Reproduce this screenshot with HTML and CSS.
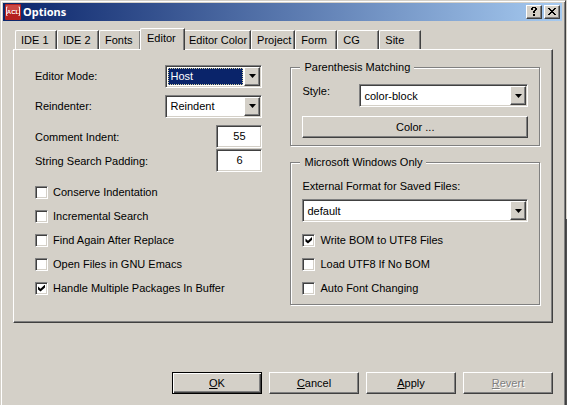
FILE: index.html
```html
<!DOCTYPE html>
<html lang="en">
<head>
<meta charset="utf-8">
<title>Options</title>
<link rel="stylesheet" href="styles.css">
</head>
<body>
<main class="window">
  <header class="titlebar">
    <svg class="app-icon" width="16" height="16" viewBox="0 0 16 16" aria-hidden="true">
      <rect width="16" height="16" rx="1" fill="#b5201f"/>
      <rect x="1" y="1" width="14" height="6" fill="#cc4844"/>
      <path d="M2.500 3H1.500V11.500H2.500M13.500 3H14.500V11.500H13.500" fill="none" stroke="#fff" stroke-opacity=".85"/>
      <text x="8" y="10" text-anchor="middle" class="app-icon-text">ACL</text>
    </svg>
    <h1 class="title">Options</h1>
    <button class="caption-button" type="button" aria-label="Help">
      <svg width="8" height="9" viewBox="0 0 8 9" shape-rendering="crispEdges"><path d="M1 1h1V0h4v1h1v2H6v1H5v2H3V4h1V3h1V1H3v2H1zM3 7h2v2H3z"/></svg>
    </button>
    <button class="caption-button caption-close" type="button" aria-label="Close">
      <svg width="8" height="7" viewBox="0 0 8 7" shape-rendering="crispEdges"><path d="M0 0h2v1h1v1h2V1h1V0h2v1H7v1H6v1H5v1h1v1h1v1h1v1H6V6H5V5H3v1H2v1H0V6h1V5h1V4h1V3H2V2H1V1H0z"/></svg>
    </button>
  </header>

  <nav class="tabs" role="tablist">
    <button class="tab" type="button" role="tab">IDE 1</button>
    <button class="tab" type="button" role="tab">IDE 2</button>
    <button class="tab" type="button" role="tab">Fonts</button>
    <button class="tab tab-selected" type="button" role="tab" aria-selected="true">Editor</button>
    <button class="tab" type="button" role="tab">Editor Color</button>
    <button class="tab" type="button" role="tab">Project</button>
    <button class="tab" type="button" role="tab">Form</button>
    <button class="tab" type="button" role="tab">CG</button>
    <button class="tab" type="button" role="tab">Site</button>
  </nav>

  <section class="panel" role="tabpanel">
    <div class="column settings">
      <div class="row">
        <label for="mode">Editor Mode:</label>
        <span class="combo combo-focused">
          <select id="mode"><option>Host</option></select>
          <span class="arrow"><svg width="7" height="4" viewBox="0 0 7 4"><path d="M0 0h7L3.500 4z"/></svg></span>
        </span>
      </div>
      <div class="row">
        <label for="reindenter">Reindenter:</label>
        <span class="combo">
          <select id="reindenter"><option>Reindent</option></select>
          <span class="arrow"><svg width="7" height="4" viewBox="0 0 7 4"><path d="M0 0h7L3.500 4z"/></svg></span>
        </span>
      </div>
      <div class="numbers">
        <div class="row">
          <label for="indent">Comment Indent:</label>
          <input class="number" id="indent" type="text" value="55">
        </div>
        <div class="row">
          <label for="padding">String Search Padding:</label>
          <input class="number" id="padding" type="text" value="6">
        </div>
      </div>
      <div class="checks">
        <label class="check"><input type="checkbox">Conserve Indentation</label>
        <label class="check"><input type="checkbox">Incremental Search</label>
        <label class="check"><input type="checkbox">Find Again After Replace</label>
        <label class="check"><input type="checkbox">Open Files in GNU Emacs</label>
        <label class="check"><input type="checkbox" checked>Handle Multiple Packages In Buffer</label>
      </div>
    </div>

    <div class="column groups">
      <fieldset class="group">
        <legend>Parenthesis Matching</legend>
        <div class="style-row">
          <label for="style">Style:</label>
          <span class="combo">
            <select id="style"><option>color-block</option></select>
            <span class="arrow"><svg width="7" height="4" viewBox="0 0 7 4"><path d="M0 0h7L3.500 4z"/></svg></span>
          </span>
        </div>
        <button class="button" type="button">Color ...</button>
      </fieldset>
      <fieldset class="group group-files">
        <legend>Microsoft Windows Only</legend>
        <label class="format-label" for="format">External Format for Saved Files:</label>
        <span class="combo">
          <select id="format"><option>default</option></select>
          <span class="arrow"><svg width="7" height="4" viewBox="0 0 7 4"><path d="M0 0h7L3.500 4z"/></svg></span>
        </span>
        <div class="checks group-checks">
          <label class="check"><input type="checkbox" checked>Write BOM to UTF8 Files</label>
          <label class="check"><input type="checkbox">Load UTF8 If No BOM</label>
          <label class="check"><input type="checkbox">Auto Font Changing</label>
        </div>
      </fieldset>
    </div>
  </section>

  <footer class="actions">
    <button class="button button-default" type="button"><u>O</u>K</button>
    <button class="button" type="button"><u>C</u>ancel</button>
    <button class="button" type="button"><u>A</u>pply</button>
    <button class="button" type="button" disabled><u>R</u>evert</button>
  </footer>
</main>
</body>
</html>
```
FILE: styles.css
```css
:root {
  --face: #d4d0c8;
  --shadow: #808080;
  --dark: #404040;
}

* {
  box-sizing: border-box;
}

body {
  margin: 0;
  padding-right: 1px;
  min-height: 100vh;
  display: flex;
  background: linear-gradient(#d4d0c8 219px, #505050 219px);
  font: 11px/14px "Liberation Sans", Arial, sans-serif;
  color: #000;
}

button,
input,
select {
  font: inherit;
  color: inherit;
  margin: 0;
  border-radius: 0;
}

/* Window frame */
.window {
  flex: 1;
  padding: 1px 1px 0 1px;
  background: var(--face);
  border: solid;
  border-width: 1px 1px 0 1px;
  border-color: var(--face) var(--dark) var(--face) var(--face);
  box-shadow: inset 1px 1px #fff, inset -1px 0 var(--shadow);
}

.titlebar {
  display: flex;
  align-items: center;
  height: 18px;
  margin: 1px 2px 0 1px;
  padding: 0 2px;
  background: linear-gradient(90deg, #0a246a, #a6caf0);
}

.app-icon {
  flex: none;
}

.app-icon-text {
  font: bold 6px "Liberation Sans", sans-serif;
  fill: #fff;
}

.title {
  flex: 1;
  margin: 0 0 0 2px;
  font: bold 11px/16px "Noto Sans", sans-serif;
  color: #fff;
}

.caption-button,
.button,
.arrow {
  background: var(--face);
  border: 1px solid;
  border-color: #fff var(--dark) var(--dark) #fff;
  box-shadow: inset -1px -1px var(--shadow);
}

.caption-button {
  display: flex;
  align-items: center;
  justify-content: center;
  width: 16px;
  height: 14px;
  padding: 0 1px 1px 0;
}

.caption-close {
  margin-left: 2px;
}

/* Tabs */
.tabs {
  display: flex;
  align-items: flex-end;
  height: 28px;
  padding-left: 13px;
}

.tab {
  height: 19px;
  min-width: 42px;
  padding: 0 3px 0 5px;
  text-align: left;
  background: var(--face);
  border: solid;
  border-width: 1px 1px 0 1px;
  border-color: #fff var(--dark) #fff #fff;
  border-top-left-radius: 2px;
  box-shadow: inset -1px 0 var(--shadow);
  white-space: nowrap;
}

.tab-selected {
  position: relative;
  height: 22px;
  min-width: 45px;
  margin: 0 -2px -1px -1px;
  padding: 0 4px 3px 6px;
}

.panel {
  display: grid;
  grid-template-columns: 227fr 250fr;
  gap: 28px;
  margin: 0 11px;
  padding: 10px 11px 16px 21px;
  border: solid;
  border-width: 1px;
  border-color: #fff var(--dark) var(--dark) #fff;
  box-shadow: inset -1px -1px var(--shadow);
}

/* Fields */
.settings {
  padding-top: 1px;
}

.row {
  display: flex;
  align-items: center;
  justify-content: space-between;
}

.column > .row {
  height: 30px;
}

.combo {
  position: relative;
  display: flex;
  height: 23px;
  background: #fff;
  border: 1px solid;
  border-color: var(--shadow) #fff #fff var(--shadow);
  box-shadow: inset 1px 1px var(--dark), inset -1px -1px var(--face);
}

.row .combo {
  width: 97px;
}

.combo select {
  flex: 1;
  min-width: 0;
  appearance: none;
  border: 0;
  background: none;
  padding: 0 20px 0 4px;
  outline: 0;
}

.combo-focused select {
  margin: 2px 18px 2px 2px;
  padding: 0 1px;
  background: #0a246a;
  color: #fff;
  border: 1px dotted #d4d0a0;
}

.arrow {
  position: absolute;
  top: 1px;
  right: 1px;
  bottom: 1px;
  display: flex;
  align-items: center;
  justify-content: center;
  width: 16px;
  pointer-events: none;
}

.numbers {
  display: grid;
  gap: 1px;
  margin-top: 4px;
}

.number {
  width: 46px;
  height: 23px;
  padding: 0 0 2px;
  text-align: center;
  background: #fff;
  border: 1px solid;
  border-color: var(--shadow) #fff #fff var(--shadow);
  box-shadow: inset 1px 1px var(--dark), inset -1px -1px var(--face);
  outline: 0;
}

.checks {
  display: grid;
  margin-top: 8px;
}

.check {
  display: flex;
  align-items: center;
  gap: 5px;
  height: 24px;
}

.check input {
  flex: none;
  display: grid;
  place-items: center;
  appearance: none;
  width: 13px;
  height: 13px;
  margin: 0;
  background: #fff;
  border: 1px solid;
  border-color: var(--shadow) #fff #fff var(--shadow);
  box-shadow: inset 1px 1px var(--dark), inset -1px -1px var(--face);
}

.check input:checked::before {
  content: "";
  width: 7px;
  height: 7px;
  background: #000;
  clip-path: polygon(0 29%, 36% 60%, 100% 0, 100% 43%, 36% 100%, 0 71%);
}

/* Groups */
.groups {
  display: flex;
  flex-direction: column;
  gap: 8px;
}

.group {
  min-width: 0;
  margin: 0 1px 1px 0;
  padding: 10px 11px 7px 11px;
  border: 1px solid var(--shadow);
  box-shadow: 1px 1px #fff, inset 1px 1px #fff;
}

.group-files {
  padding-bottom: 4px;
}

.group legend {
  margin-left: -2px;
  padding: 0 4px;
  background: var(--face);
}

.group .button {
  width: 100%;
  margin-top: 9px;
}

.style-row {
  display: grid;
  grid-template-columns: 57px 1fr;
}

.format-label {
  display: block;
  margin-bottom: 6px;
}

.group-checks {
  margin-top: 6px;
}

/* Buttons */
.button {
  height: 22px;
  padding: 0;
}

.button:disabled {
  color: var(--shadow);
  text-shadow: 1px 1px #fff;
}

.button-default {
  border-color: #000;
  box-shadow: inset 1px 1px #fff, inset -1px -1px var(--dark), inset -2px -2px var(--shadow);
}

.actions {
  display: flex;
  justify-content: flex-end;
  gap: 7px;
  margin: 49px 11px 10px;
}

.actions .button {
  width: 90px;
}
```
